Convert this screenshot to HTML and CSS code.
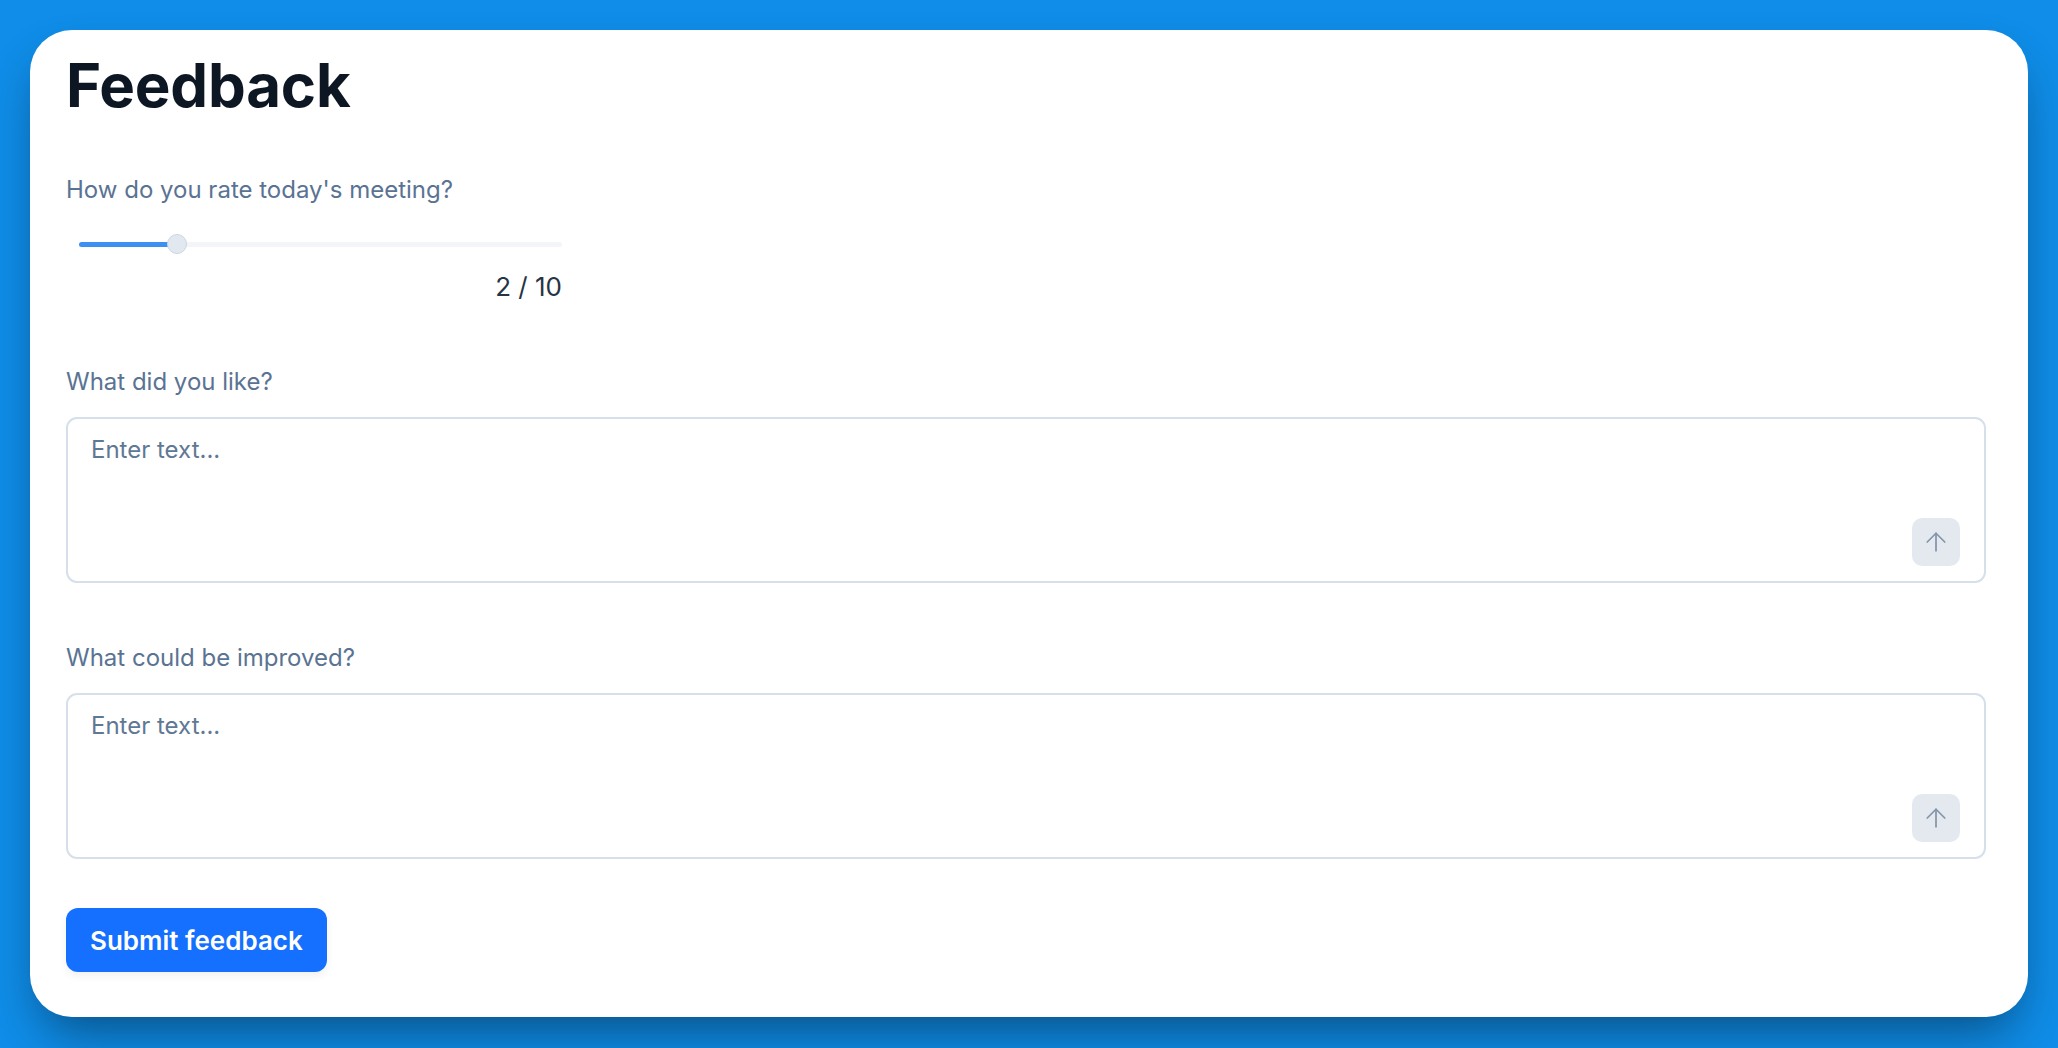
FILE: index.html
```html
<!DOCTYPE html>
<html lang="en">
<head>
<meta charset="utf-8">
<title>Feedback</title>
<link rel="stylesheet" href="styles.css">
</head>
<body>
<main class="card">
  <h1 class="title">Feedback</h1>

  <section class="rating">
    <div class="label">How do you rate today's meeting?</div>
    <div class="slider" role="slider" aria-valuemin="0" aria-valuemax="10" aria-valuenow="2">
      <div class="slider-fill"></div>
      <div class="slider-thumb"></div>
      <div class="slider-rest"></div>
    </div>
    <div class="rating-value">2 / 10</div>
  </section>

  <section class="question">
    <label class="label" for="liked">What did you like?</label>
    <div class="field">
      <textarea id="liked" class="field-input" placeholder="Enter text..."></textarea>
      <div class="field-actions">
        <button class="send" type="button" aria-label="Send">
          <svg viewBox="0 0 24 24" width="30" height="30" fill="none" stroke="currentColor" stroke-width="1.4" stroke-linecap="round" stroke-linejoin="round"><path d="M5 12l7-7 7 7"/><path d="M12 19V5"/></svg>
        </button>
      </div>
    </div>
  </section>

  <section class="question">
    <label class="label" for="improve">What could be improved?</label>
    <div class="field">
      <textarea id="improve" class="field-input" placeholder="Enter text..."></textarea>
      <div class="field-actions">
        <button class="send" type="button" aria-label="Send">
          <svg viewBox="0 0 24 24" width="30" height="30" fill="none" stroke="currentColor" stroke-width="1.4" stroke-linecap="round" stroke-linejoin="round"><path d="M5 12l7-7 7 7"/><path d="M12 19V5"/></svg>
        </button>
      </div>
    </div>
  </section>

  <button class="submit" type="button">Submit feedback</button>
</main>
</body>
</html>
```

FILE: styles.css
```css
* {
  box-sizing: border-box;
}

html {
  background: #0f8de8;
}

body {
  margin: 0;
  padding: 30px;
  min-height: 100vh;
  background: #0f8de8;
  font-family: Inter, "Noto Sans", "Liberation Sans", sans-serif;
}

.card {
  display: flex;
  flex-direction: column;
  align-items: flex-start;
  background: #ffffff;
  border-radius: 42px;
  padding: 19px 42px 45px 36px;
  box-shadow: 0 25px 50px -12px rgba(0, 0, 0, 0.45);
}

.title {
  margin: 0;
  font-size: 60px;
  line-height: 72px;
  font-weight: 700;
  color: #0d1724;
  letter-spacing: -0.2px;
}

.rating {
  margin-top: 51px;
  width: 496px;
  display: flex;
  flex-direction: column;
}

.label {
  display: block;
  font-size: 24px;
  line-height: 36px;
  color: #5a7393;
}

.slider {
  margin-top: 26px;
  margin-left: 13px;
  height: 20px;
  display: flex;
  align-items: center;
}

.slider-fill {
  width: 90px;
  height: 5px;
  margin-right: -2px;
  background: #3d8ff4;
  border-radius: 3px 0 0 3px;
}

.slider-thumb {
  width: 20px;
  height: 20px;
  border-radius: 50%;
  background: #e2e8f0;
  border: 1px solid #cdd6e1;
  flex: none;
  position: relative;
  z-index: 1;
}

.slider-rest {
  flex: 1;
  height: 5px;
  margin-left: -2px;
  background: #f3f5f8;
  border-radius: 0 3px 3px 0;
}

.rating-value {
  margin-top: 13px;
  text-align: right;
  font-size: 26px;
  line-height: 39px;
  color: #263445;
}

.question {
  margin-top: 58px;
  width: 100%;
  display: flex;
  flex-direction: column;
}

.question + .question {
  margin-top: 57px;
}

.field {
  margin-top: 17px;
  height: 166px;
  width: 100%;
  border: 2px solid #d6e0ea;
  border-radius: 11px;
  padding: 13px 24px 15px 23px;
  display: flex;
  flex-direction: column;
}

.field-input {
  flex: 1;
  border: none;
  outline: none;
  resize: none;
  padding: 0;
  margin: 0;
  font-family: inherit;
  font-size: 24px;
  line-height: 36px;
  color: #263445;
  background: transparent;
}

.field-input::placeholder {
  color: #5f7894;
  opacity: 1;
}

.field-actions {
  display: flex;
  justify-content: flex-end;
}

.send {
  width: 48px;
  height: 48px;
  border: none;
  border-radius: 10px;
  background: #e4e9f0;
  color: #8495aa;
  padding: 0;
  display: flex;
  align-items: center;
  justify-content: center;
  cursor: pointer;
}

.submit {
  margin-top: 49px;
  height: 64px;
  padding: 0 24px;
  border: none;
  border-radius: 12px;
  background: #1570ff;
  color: #ffffff;
  font-family: inherit;
  font-size: 26px;
  font-weight: 600;
  box-shadow: 0 4px 8px rgba(15, 23, 42, 0.06);
  cursor: pointer;
}
```
